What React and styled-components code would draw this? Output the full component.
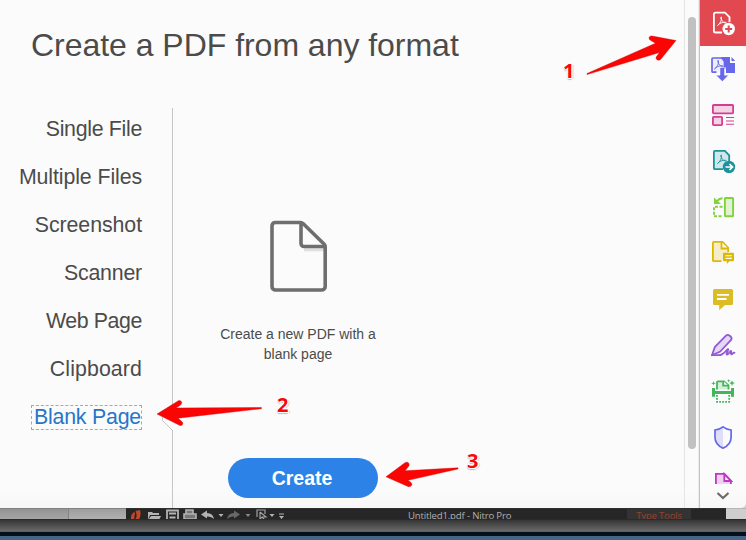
import React from "react";
import styled, { createGlobalStyle } from "styled-components";

const Global = createGlobalStyle`
  * { box-sizing: border-box; }
  body { margin: 0; background: #000; overflow: hidden; }
`;

const Screen = styled.div`
  position: relative;
  width: 746px;
  height: 540px;
  overflow: hidden;
  display: flex;
  flex-direction: column;
  background: linear-gradient(90deg, #8d8d8d 0, #8d8d8d 126px, #262626 126px, #262626 726px, #cecece 726px);
  font-family: "Liberation Sans", Arial, sans-serif;
  color: #4b4b4b;
`;

const Panel = styled.div`
  display: flex;
  height: 508px;
  flex: none;
  background: linear-gradient(#fbfbfb 490px, #f7f7f7);
  border-bottom-right-radius: 5px;
  overflow: hidden;
`;

const Main = styled.main`
  width: 684px;
  display: flex;
  flex-direction: column;
`;

const Title = styled.h1`
  margin: 0;
  height: 108px;
  padding: 25px 0 0 31px;
  font-size: 32px;
  line-height: 40px;
  letter-spacing: -0.03px;
  font-weight: 400;
  white-space: nowrap;
`;

const Body = styled.div`
  flex: 1;
  display: flex;
`;

const Formats = styled.nav`
  position: relative;
  width: 173px;
  padding: 5px 30px 0 0;
  border-right: 1px solid #c6c6c6;
  display: flex;
  flex-direction: column;
  align-items: flex-end;
  gap: 16px;
`;

const Format = styled.a`
  height: 32px;
  display: flex;
  align-items: center;
  font-size: 21.33px;
  letter-spacing: ${(p) => p.$spacing || 0}px;
  white-space: nowrap;
  color: ${(p) => (p.$active ? "#2676c9" : "#4b4b4b")};
`;

const FocusRing = styled.span`
  display: flex;
  align-items: center;
  height: 25px;
  width: 111px;
  justify-content: flex-end;
  border: 1px dashed #7fb2e4;
  line-height: 23px;
`;

const Notch = styled.svg`
  position: absolute;
  left: 160px;
  top: 298px;
`;

const Detail = styled.section`
  width: 250px;
  display: flex;
  flex-direction: column;
  align-items: center;
  padding-top: 112px;
  > svg { margin-left: 2px; }
`;

const Blurb = styled.p`
  margin: 31px 0 0;
  width: 170px;
  font-size: 14px;
  line-height: 20px;
  text-align: center;
`;

const CreateButton = styled.button`
  margin: 94px 0 0 10px;
  width: 150px;
  height: 40px;
  border: 0;
  border-radius: 20px;
  background: #2d82e8;
  color: #fff;
  font: bold 19.5px/38px "Liberation Sans", Arial, sans-serif;
  padding: 0 2px 1px 0;
`;

const ScrollTrack = styled.div`
  width: 16px;
  padding: 17px 0 0 3px;
  border-left: 1px solid #e5e5e5;
  border-right: 1px solid #c3c3c3;
  box-shadow: inset -1px 0 0 #ededed;
`;

const ScrollThumb = styled.div`
  width: 8px;
  height: 432px;
  border-radius: 4px;
  background: #c1c1c1;
`;

const Rail = styled.aside`
  width: 46px;
  display: flex;
  flex-direction: column;
`;

const Tool = styled.div`
  height: ${(p) => p.$height || 46}px;
  flex: none;
  overflow: hidden;
  background: ${(p) => (p.$active ? "#e24850" : "transparent")};
  svg { display: block; }
`;

const Strip = styled.div`
  height: 11px;
  flex: none;
  display: flex;
  overflow: hidden;
  border-top: 1px solid rgba(90, 90, 90, 0.2);
`;

const StripCell = styled.div`
  width: ${(p) => p.$w}px;
  flex: none;
  height: 11px;
  background: ${(p) => p.$bg};
  border-right: ${(p) => (p.$line ? "1px solid #828282" : "0")};
  color: ${(p) => p.$fg || "#b0b0b0"};
  font: 9.6px/14px "Open Sans", "Noto Sans", sans-serif;
  letter-spacing: ${(p) => p.$spacing || "0"};
  text-align: ${(p) => p.$align || "left"};
  white-space: nowrap;
  overflow: hidden;
  svg { display: block; }
`;

const Bezel = styled.div`
  height: 13px;
  flex: none;
  background: linear-gradient(#1f1f1f 0, #353535 1px, #484848 5px, #696969 12px, #555 13px);
`;

const Gap = styled.div`
  height: 4px;
  flex: none;
  background: #03101b;
`;

const Desktop = styled.div`
  height: 4px;
  flex: none;
  background: #466485;
`;

const Arrows = styled.svg`
  position: absolute;
  inset: 0;
  pointer-events: none;
`;

const Marker = styled.span`
  position: absolute;
  left: ${(p) => p.$x}px;
  top: ${(p) => p.$y}px;
  font: bold 20px/28px "Open Sans", "Noto Sans", sans-serif;
  color: #f50a0a;
  text-shadow: 1px 0 #fff, -1px 0 #fff, 0 1px #fff, 0 -1px #fff, 1px 1px 0 #fff, 2px 1px 1px #ccc, 0 2px 1px #bbb, -1px 1px 1px #ddd;
`;

function Icon({ children, ...rest }) {
  return (
    <svg width="46" height="46" viewBox="0 0 46 46" fill="none" {...rest}>
      {children}
    </svg>
  );
}

const Acrobat = (props) => (
  <path d="M17.500 25.500c2.500-1.500 4.500-5.500 4-8-.2-1-1-.8-.8.300.4 2.400 2.200 4.400 4.500 5.200 1.200.4 1.400-.6.300-.7-3-.2-6 .8-8 3.200z" strokeWidth=".9" {...props} />
);

const CreatePdf = () => (
  <Icon stroke="#fff" strokeWidth="1.800">
    <path d="M22 32.500h-6.500a1.600 1.600 0 0 1-1.600-1.600V14.300a1.600 1.600 0 0 1 1.600-1.600H25l4.500 4.500V22" />
    <Acrobat />
    <circle cx="28.700" cy="29" r="6.200" fill="#fff" stroke="none" />
    <path d="M28.700 25.500v7M25.200 29h7" stroke="#e24850" strokeWidth="2" />
  </Icon>
);

const ExportPdf = () => (
  <Icon>
    <path d="M16.500 26.200H13a1 1 0 0 1-1-1V13a1 1 0 0 1 1-1h8.500l3 3v8" stroke="#6767ec" strokeWidth="1.700" fill="#ededfc" />
    <Acrobat transform="translate(-3 -2.500)" stroke="#6767ec" />
    <path d="M21 11h9v6h5v10h-9v-6h-2v-5zM31.500 11l3.700 4h-3.700z" fill="#6767ec" />
    <path d="M20 21.500h4.500v7.700h4L22.300 35.500 16 29.200h4z" fill="#6767ec" stroke="#fbfbfb" strokeWidth=".5" />
  </Icon>
);

const Organize = () => (
  <Icon stroke="#d63d91" strokeWidth="1.800">
    <rect x="12.900" y="13" width="20.200" height="8.400" rx=".8" fill="#f5d3e6" />
    <rect x="12.900" y="24.900" width="9.200" height="8.200" rx=".8" fill="#f5d3e6" />
    <path d="M26 25.500h8M26 29h8M26 32.300h8" strokeWidth="1.100" />
  </Icon>
);

const SendPdf = () => (
  <Icon stroke="#1d929b" strokeWidth="1.800">
    <path d="M23 31.200h-8.100a1 1 0 0 1-1-1V13.900a1 1 0 0 1 1-1h10l4.300 4.500V23" fill="#d0e8e9" />
    <Acrobat />
    <circle cx="29" cy="29" r="6.200" fill="#1d929b" stroke="none" />
    <path d="M25.500 29h6.500M29.500 26l3 3-3 3" stroke="#fff" strokeWidth="1.700" />
  </Icon>
);

const Rotate = () => (
  <Icon stroke="#82d13f" strokeWidth="1.900">
    <rect x="24.900" y="14" width="8.200" height="18.200" rx=".6" fill="#e2f3d4" />
    <path d="M22.500 22.700H14v9.500h9" strokeDasharray="3 1.500" />
    <path d="M22.500 14.200q-3-.2-5.500 3" />
    <path d="M14 13.500v6.600h7z" fill="#82d13f" stroke="none" />
  </Icon>
);

const PageComment = () => (
  <Icon stroke="#dcb900" strokeWidth="1.800">
    <path d="M21.500 31.200h-7.600a1 1 0 0 1-1-1V12.900a1 1 0 0 1 1-1h8.600l5.700 6V22" fill="#f5edc8" />
    <path d="M21.500 12v6.500h6.700" fill="#fbfbfb" />
    <path d="M24 22.800h9a1 1 0 0 1 1 1v6.400a1 1 0 0 1-1 1h-3.500L26.800 34v-2.800H24a1 1 0 0 1-1-1v-6.400a1 1 0 0 1 1-1z" fill="#dcb900" stroke="none" />
    <path d="M25.500 25.700h6.300M25.500 28.400h6.300" stroke="#fff" strokeWidth="1.100" />
  </Icon>
);

const Comment = () => (
  <Icon>
    <path d="M14.500 13h17a1.500 1.500 0 0 1 1.500 1.500v13a1.500 1.500 0 0 1-1.500 1.500H25l-5.800 5.200V29h-4.700a1.500 1.500 0 0 1-1.500-1.500v-13a1.500 1.500 0 0 1 1.500-1.500z" fill="#ddbb25" />
    <path d="M17 18.800h12M17 23h9.500" stroke="#fff" strokeWidth="1.800" />
  </Icon>
);

const Sign = () => (
  <Icon stroke="#9259d5" strokeWidth="1.800" strokeLinejoin="round" strokeLinecap="round">
    <path d="M12 33.200l2.700-8L26 13.600c2-2 7 1.800 5.100 4.300L20.300 29.500z" fill="#e4d8f4" />
    <path d="M12 33.200h7c5 0 9-8 9.300-5.800.2 1.500-3 5-1.200 5.200 1.600.2 3.400-4.400 4-3.500.5.800-1 3.200.4 3.200 1.200 0 1.600-2.400 3-1.500" />
  </Icon>
);

const Scan = () => (
  <Icon stroke="#42b65a" strokeWidth="1.800">
    <path d="M17 21.500v-7.200a1 1 0 0 1 1-1h6l4.500 4v4.200" fill="#d4efd9" />
    <path d="M23.200 13v4.700h5.500" fill="#fbfbfb" />
    <path d="M12 20h3v3h16v-3h3v8.700h-3V26H15v2.700h-3z" fill="#42b65a" stroke="none" />
    <path d="M17 27v6.800h12.200V27" strokeDasharray="1.800 1.200" />
    <path d="M13.500 13l.6 1.700 1.700.6-1.700.6-.6 1.700-.6-1.700-1.700-.6 1.700-.6zM28.700 11l.5 1.200 1.200.5-1.200.5-.5 1.200-.5-1.200-1.200-.5 1.200-.5zM32 12.200l.8 2.100 2.100.8-2.100.8-.8 2.100-.8-2.100-2.100-.8 2.100-.8z" fill="#42b65a" stroke="none" />
  </Icon>
);

const Protect = () => (
  <Icon>
    <path d="M23 13q-4 2.800-7.800 3v7.500Q15.200 31 23 34z" fill="#dedefa" />
    <path d="M23 12.900q3.800 2.900 8.100 3.100v7.200q0 7.400-8.100 10.900-8-3.500-8-10.900V16q4.200-.2 8-3.100z" stroke="#6767ec" strokeWidth="1.700" />
  </Icon>
);

const MoreTool = () => (
  <Icon stroke="#c137c5" strokeWidth="1.800">
    <path d="M15.900 30V13.900h8.500l6.500 7V30" fill="#f0d0f1" />
    <path d="M24.300 14v7h6.900z" fill="#fbfbfb" />
  </Icon>
);

const ScrollDown = () => (
  <svg width="46" height="24" viewBox="0 0 46 24" fill="none">
    <path d="M17.500 9l5.500 5 5.500-5" stroke="#6b6b6b" strokeWidth="2.200" />
  </svg>
);

const BlankPage = () => (
  <svg width="58" height="73" viewBox="0 0 58 73" fill="none">
    <path d="M34 29.800h22" stroke="#dfdfdf" strokeWidth="3" />
    <path d="M5 2.500h25.500q1.500 0 2.500 1L54 24q1.200 1.200 1.200 2.700v39.800a3.500 3.500 0 0 1-3.500 3.500H5.500A3.500 3.500 0 0 1 2 66.500V6a3.500 3.500 0 0 1 3-3.500z" stroke="#6e6e6e" strokeWidth="3.600" strokeLinejoin="round" />
    <path d="M31 3v20.500a3 3 0 0 0 3 3h21" stroke="#6e6e6e" strokeWidth="3.600" />
  </svg>
);

const QuickBar = () => (
  <svg width="160" height="11" viewBox="126 509 160 11" fill="none">
    <path d="M131 520q-.5-7 4-8l-1 8zM135.500 511l4.500-1q1.500 5-1 9.500h-4q3-3 .5-8.500z" fill="#c1482a" />
    <path d="M148 520v-8h4l1 1h6v2h-9zM151 516h10l-2 4h-11z" fill="#b3b3b3" />
    <path d="M167 510.500h11V521h-11zM169 513.500h7M169.500 517.500h6" stroke="#b3b3b3" strokeWidth="1.800" />
    <path d="M186 514v-4h7v4M184 514h12v5h-12z" stroke="#b3b3b3" strokeWidth="1.600" fill="#777" />
    <path d="M201 514.500l6-4v2.500q6 0 7 6-3-3-7-2.500v2z" fill="#b3b3b3" />
    <path d="M240 514.500l-6-4v2.500q-6 0-7 6 3-3 7-2.500v2z" fill="#686868" />
    <path d="M218.500 514h5l-2.500 3zM269.500 514h5l-2.500 3zM279 516h5l-2.500 3z" fill="#b3b3b3" />
    <path d="M245.500 514h5l-2.500 3z" fill="#888" />
    <path d="M257 517v-7h8v4M260 512v7l2-2 3 3M260 512l6 5h-4" stroke="#a0a0a0" strokeWidth="1.200" />
    <path d="M279 514h5" stroke="#b3b3b3" />
  </svg>
);

const tools = [CreatePdf, ExportPdf, Organize, SendPdf, Rotate, PageComment, Comment, Sign, Scan, Protect];

const formats = [
  { name: "Single File", spacing: -0.3 },
  { name: "Multiple Files", spacing: -0.1 },
  { name: "Screenshot", spacing: -0.07 },
  { name: "Scanner", spacing: -0.2 },
  { name: "Web Page", spacing: -0.4 },
  { name: "Clipboard", spacing: 0.1 },
];

export default function App() {
  return (
    <Screen>
      <Global />
      <Panel>
        <Main>
          <Title>Create a PDF from any format</Title>
          <Body>
            <Formats>
              {formats.map(({ name, spacing }) => (
                <Format key={name} $spacing={spacing}>{name}</Format>
              ))}
              <Format $active $spacing={-0.2}>
                <FocusRing>Blank Page</FocusRing>
              </Format>
              <Notch width="14" height="28" viewBox="160 406 14 28" fill="none">
                <path d="M172.500 408v22" stroke="#fbfbfb" strokeWidth="2" />
                <path d="M172.500 408L162.500 417v3.500L172.500 430.500" stroke="#c6c6c6" />
              </Notch>
            </Formats>
            <Detail>
              <BlankPage />
              <Blurb>Create a new PDF with a blank page</Blurb>
              <CreateButton>Create</CreateButton>
            </Detail>
          </Body>
        </Main>
        <ScrollTrack>
          <ScrollThumb />
        </ScrollTrack>
        <Rail>
          {tools.map((Glyph, i) => (
            <Tool key={i} $active={i === 0}>
              <Glyph />
            </Tool>
          ))}
          <Tool $height={24}>
            <MoreTool />
          </Tool>
          <Tool $height={24}>
            <ScrollDown />
          </Tool>
        </Rail>
      </Panel>
      <Strip>
        <StripCell $w={69} $bg="linear-gradient(#939393, #a7a7a7)" $line />
        <StripCell $w={57} $bg="linear-gradient(#9e9e9e, #b2b2b2)" />
        <StripCell $w={282} $bg="#262626">
          <QuickBar />
        </StripCell>
        <StripCell $w={219} $bg="#262626" $spacing="-0.17px">Untitled1.pdf - Nitro Pro</StripCell>
        <StripCell $w={64} $bg="#333" $fg="#96432d" $align="center" $spacing="-0.2px">Type Tools</StripCell>
        <StripCell $w={35} $bg="#262626" />
        <StripCell $w={20} $bg="#cecece" />
      </Strip>
      <Bezel />
      <Gap />
      <Desktop />
      <Arrows width="746" height="540" viewBox="0 0 746 540">
        <g fill="#fb0404" stroke="#d00000" strokeWidth=".4" strokeLinejoin="round">
          <path d="M587 73.500L655.500 43.200 650.500 40.300C648 38.800 649 35.500 652 36L676 40.500 661 59C659 61.500 655 59.500 656.200 57L659.500 52.500 587 74.600z" />
          <path d="M261.500 407.500L176 408 180.500 405C183.500 402.500 180.500 399.500 178 401L157 414 179.500 425.300C182.500 426.300 184 423 181.500 421.300L178 418.200 261.500 408.700z" />
          <path d="M458 467.800L405 470.800 408.500 466.500C410.500 463.500 407.500 461 405 462.700L386 476.800 408 486.500C411 487.500 413.200 484.500 411 482.500L408 480.300 458 469z" />
        </g>
      </Arrows>
      <Marker $x={563} $y={57}>1</Marker>
      <Marker $x={277} $y={391}>2</Marker>
      <Marker $x={467} $y={447}>3</Marker>
    </Screen>
  );
}
